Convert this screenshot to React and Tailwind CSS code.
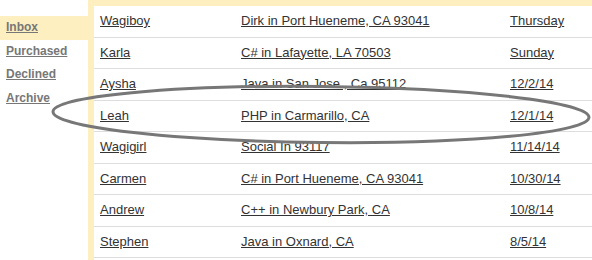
import React from "react";

const rows = [
  ["Wagiboy", "Dirk in Port Hueneme, CA 93041", "Thursday"],
  ["Karla", "C# in Lafayette, LA 70503", "Sunday"],
  ["Aysha", "Java in San Jose , Ca 95112", "12/2/14"],
  ["Leah", "PHP in Carmarillo, CA", "12/1/14"],
  ["Wagigirl", "Social In 93117", "11/14/14"],
  ["Carmen", "C# in Port Hueneme, CA 93041", "10/30/14"],
  ["Andrew", "C++ in Newbury Park, CA", "10/8/14"],
  ["Stephen", "Java in Oxnard, CA", "8/5/14"],
];

const nav = ["Inbox", "Purchased", "Declined", "Archive"];

export default function App() {
  return (
    <div
      className="relative w-[592px] h-[260px] overflow-hidden bg-white flex"
      style={{ fontFamily: '"Liberation Sans", Arial, sans-serif' }}
    >
      <div className="w-[88px] shrink-0 pt-[16px]">
        {nav.map((n, i) => (
          <div
            key={n}
            className={`h-[23.7px] leading-[23.7px] pl-[6px] text-[12px] font-bold text-[#777] ${
              i === 0 ? "bg-[#fdefbf]" : ""
            }`}
          >
            <span className="underline">{n}</span>
          </div>
        ))}
      </div>
      <div className="flex-1 border-l-[6px] border-t-[6px] border-[#fdefbf] self-start h-[260px]">
        {rows.map((r, i) => (
          <div
            key={i}
            className="grid grid-cols-[141px_269px_1fr] px-[6px] h-[31.5px] leading-[29.5px] border-b border-[#dddddd] text-[13px] text-[#333]"
          >
            <span className="underline">{r[0]}</span>
            <span className="underline whitespace-nowrap">{r[1]}</span>
            <span className="underline">{r[2]}</span>
          </div>
        ))}
      </div>
      <svg
        className="absolute left-0 top-0 pointer-events-none"
        width="592"
        height="260"
        viewBox="0 0 592 260"
      >
        <ellipse
          cx="321"
          cy="114.5"
          rx="268"
          ry="28"
          transform="rotate(0.6 321 114.5)"
          fill="none"
          stroke="#777"
          strokeWidth="3"
        />
      </svg>
    </div>
  );
}
